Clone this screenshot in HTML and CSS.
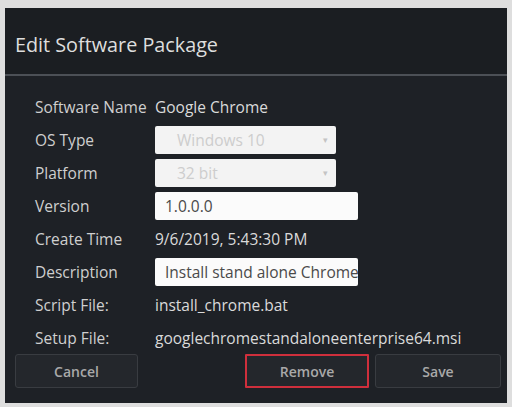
FILE: index.html
```
<!DOCTYPE html>
<html>
<head>
<meta charset="utf-8">
<link rel="stylesheet" href="styles.css">
</head>
<body>
<div class="dialog">
  <div class="header">Edit Software Package</div>
  <div class="form">
    <div class="label">Software Name</div>
    <div class="value">Google Chrome</div>

    <div class="label">OS Type</div>
    <div class="cell"><div class="select"><span>Windows 10</span><span class="caret">&#9662;</span></div></div>

    <div class="label">Platform</div>
    <div class="cell"><div class="select"><span>32 bit</span><span class="caret">&#9662;</span></div></div>

    <div class="label">Version</div>
    <div class="cell"><div class="input">1.0.0.0</div></div>

    <div class="label">Create Time</div>
    <div class="value">9/6/2019, 5:43:30 PM</div>

    <div class="label">Description</div>
    <div class="cell"><div class="input">Install stand alone Chrome</div></div>

    <div class="label">Script File:</div>
    <div class="value">install_chrome.bat</div>

    <div class="label">Setup File:</div>
    <div class="value">googlechromestandaloneenterprise64.msi</div>
  </div>
  <div class="footer">
    <div class="btn">Cancel</div>
    <div class="group">
      <div class="btn btn-danger">Remove</div>
      <div class="btn btn-save">Save</div>
    </div>
  </div>
</div>
</body>
</html>
```

FILE: styles.css
```
html, body {
  margin: 0;
  padding: 0;
  background: #dedede;
}
body {
  width: 512px;
  height: 407px;
  overflow: hidden;
  font-family: "Open Sans", "Liberation Sans", sans-serif;
}
.dialog {
  margin: 8px 5px 0 5px;
  width: 502px;
  height: 395px;
  background: #1e2126;
  display: flex;
  flex-direction: column;
}
.header {
  height: 68px;
  flex: none;
  box-sizing: border-box;
  padding: 6px 0 0 10px;
  display: flex;
  align-items: center;
  font-size: 19.8px;
  color: #dedede;
  background: #1b1e22;
  border-bottom: 2px solid #4c5056;
}
.form {
  display: grid;
  grid-template-columns: 120px 1fr;
  grid-auto-rows: 33px;
  padding: 14px 0 0 30px;
  font-size: 15.5px;
}
.label {
  color: #cfcfcf;
  display: flex;
  align-items: center;
  white-space: nowrap;
}
.value {
  color: #dadada;
  display: flex;
  align-items: center;
  white-space: nowrap;
}
.cell {
  display: flex;
  align-items: center;
}
.select, .input {
  height: 28px;
  box-sizing: border-box;
  border-radius: 2px;
  display: flex;
  align-items: center;
  white-space: nowrap;
  overflow: hidden;
}
.select {
  width: 181px;
  background: #f3f3f3;
  color: #cdcdcd;
  padding: 0 8px 0 22px;
  justify-content: space-between;
}
.caret {
  font-size: 9px;
  color: #c4c4c4;
}
.input {
  width: 203px;
  background: #fbfbfb;
  color: #4a4a4a;
  padding: 0 10px;
}
.footer {
  padding: 0 6px 0 10px;
  display: flex;
  justify-content: space-between;
}
.group {
  display: flex;
  gap: 6px;
}
.btn {
  width: 123px;
  height: 34px;
  box-sizing: border-box;
  border: 1px solid #393c41;
  border-radius: 3px;
  background: #24272c;
  color: #a9a9a9;
  font-size: 14px;
  font-weight: 600;
  display: flex;
  align-items: center;
  justify-content: center;
}
.btn-danger {
  width: 124px;
  border: 2px solid #cf2f3c;
  border-radius: 1px;
}
.btn-save {
  width: 126px;
}
```
